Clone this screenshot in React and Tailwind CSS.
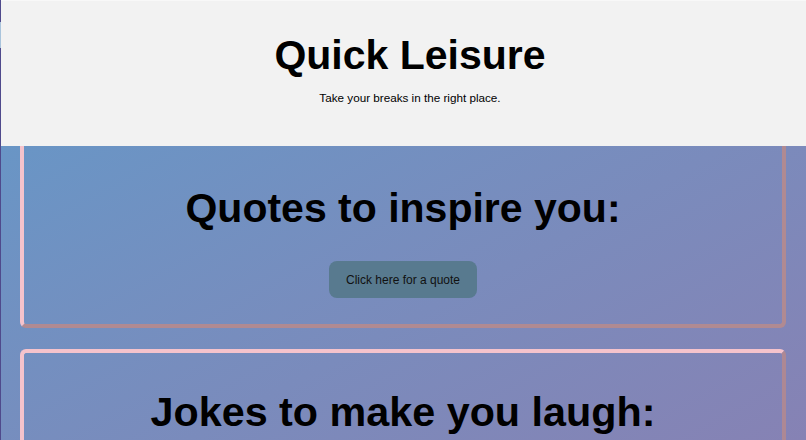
export default function App() {
  return (
    <div
      className="relative h-[440px] w-full overflow-hidden bg-gradient-to-br from-[#6199c9] to-[#8682b4] text-black"
      style={{ fontFamily: '"Liberation Sans", Arial, sans-serif' }}
    >
      <div className="absolute left-0 top-0 h-full w-px bg-[#4f4a8c]" />
      <div className="absolute left-0 top-[22px] h-[26px] w-px bg-[#a9c4dc]" />
      <header className="flex h-[146px] flex-col items-center border-t border-[#f8f8f8] bg-[#f2f2f2] pl-[14px]">
        <h1 className="mt-[31px] text-[41px] font-bold leading-[47px]">Quick Leisure</h1>
        <p className="mt-[11px] text-[11.7px] leading-[16px]">Take your breaks in the right place.</p>
      </header>
      <main className="flex flex-col gap-[21px] px-[20px]">
        <section className="flex flex-col items-center rounded-b-[6px] border-x-4 border-b-4 border-l-[#f5c3cc] border-r-[#b08a92] border-b-[#b08a92] pb-[26px] pt-[38px]">
          <h2 className="text-[41px] font-bold leading-[48px]">Quotes to inspire you:</h2>
          <button className="mt-[29px] h-[37px] w-[148px] rounded-[8px] bg-[#587a8f] text-[12px] text-[#111]">
            Click here for a quote
          </button>
        </section>
        <section className="flex flex-col items-center rounded-[6px] border-4 border-t-[#f5c3cc] border-l-[#f5c3cc] border-r-[#ad8894] border-b-[#ad8894] pb-[30px] pt-[35px]">
          <h2 className="text-[41.3px] font-bold leading-[48px]">Jokes to make you laugh:</h2>
          <div className="h-[80px]" />
        </section>
      </main>
    </div>
  );
}
